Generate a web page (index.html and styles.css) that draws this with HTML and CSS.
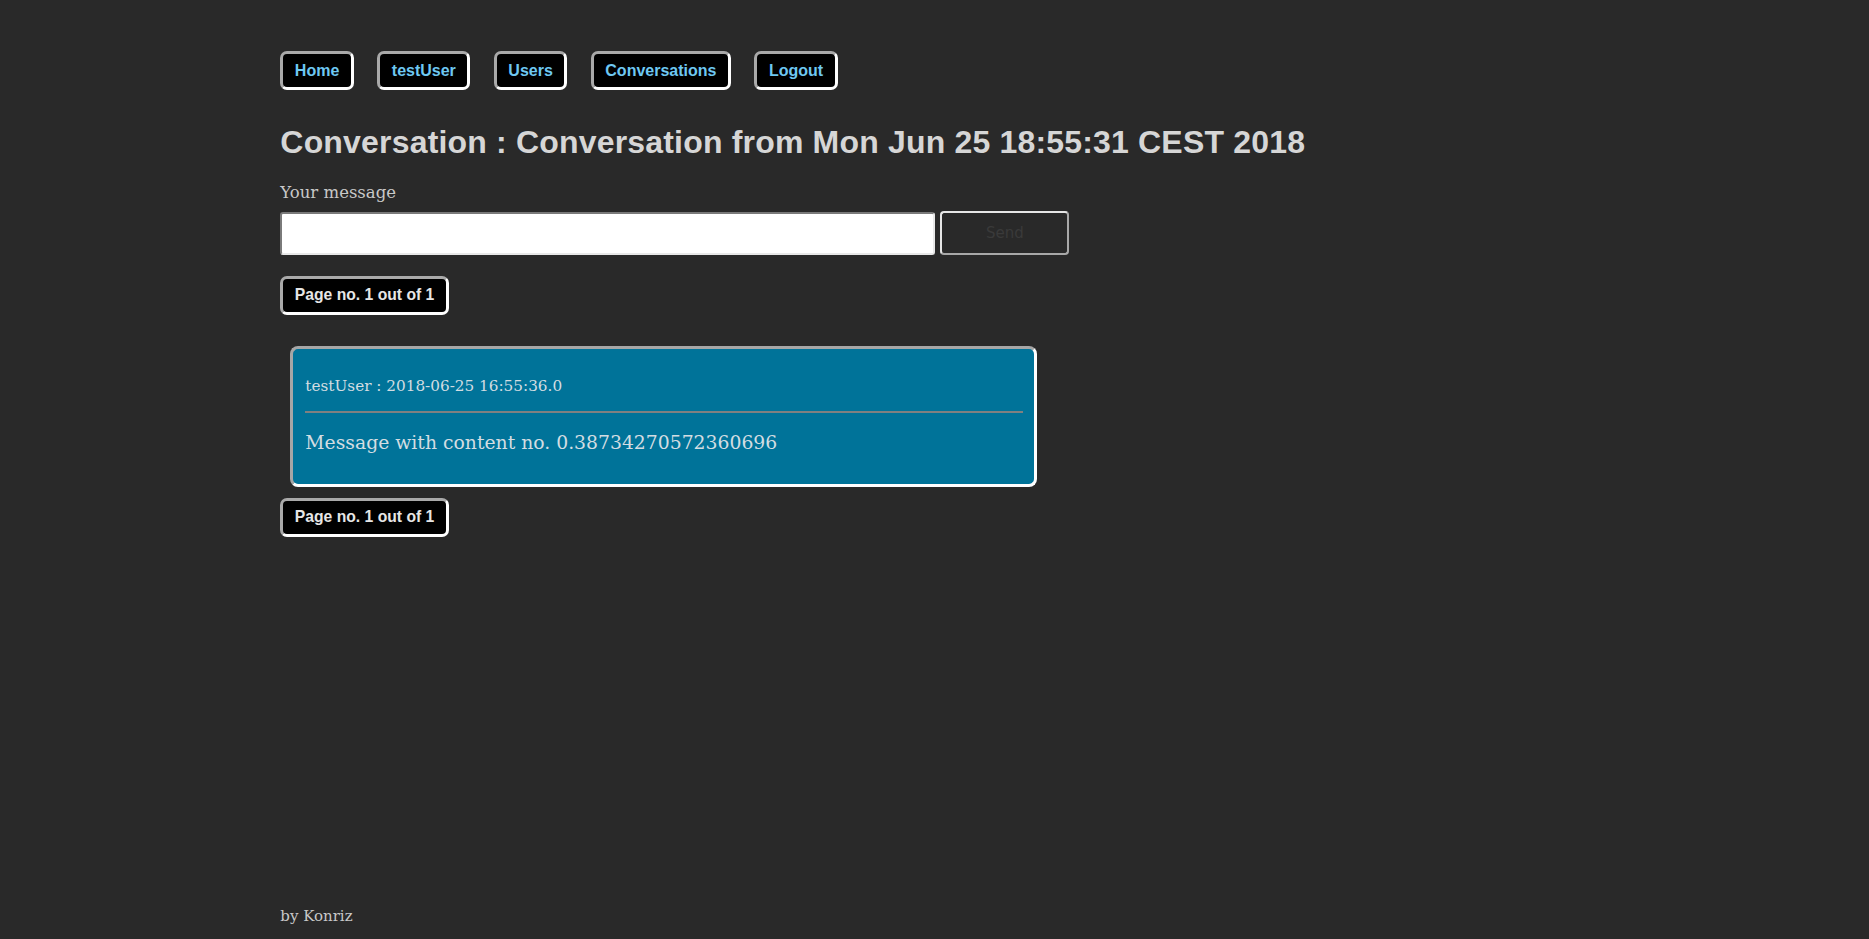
FILE: index.html
```html
<!DOCTYPE html>
<html lang="en">
<head>
<meta charset="utf-8">
<title>Conversation</title>
<link rel="stylesheet" href="styles.css">
</head>
<body>
<div class="page">
  <nav class="nav">
    <a class="btn nav-btn" href="#">Home</a>
    <a class="btn nav-btn" href="#">testUser</a>
    <a class="btn nav-btn" href="#">Users</a>
    <a class="btn nav-btn" href="#">Conversations</a>
    <a class="btn nav-btn" href="#">Logout</a>
  </nav>
  <h1 class="title">Conversation : Conversation from Mon Jun 25 18:55:31 CEST 2018</h1>
  <form class="msg-form">
    <label class="label" for="msg">Your message</label>
    <div class="form-row">
      <input class="msg-input" id="msg" type="text">
      <button class="send" type="button" disabled>Send</button>
    </div>
  </form>
  <div class="pager-row"><span class="btn pager">Page no. 1 out of 1</span></div>
  <div class="card">
    <p class="card-meta">testUser : 2018-06-25 16:55:36.0</p>
    <hr class="card-rule">
    <p class="card-text">Message with content no. 0.38734270572360696</p>
  </div>
  <div class="pager-row pager-row-2"><span class="btn pager">Page no. 1 out of 1</span></div>
  <footer class="footer">by Konriz</footer>
</div>
</body>
</html>
```
FILE: styles.css
```css
* { box-sizing: border-box; }
html, body { margin: 0; padding: 0; }
body {
  background: #292929;
  color: #cfcfcf;
  font-family: "DejaVu Serif", serif;
}
.page {
  margin: 0 15%;
  min-height: 100vh;
  padding-top: 51px;
  display: flex;
  flex-direction: column;
  align-items: flex-start;
}
.nav {
  display: flex;
  gap: 23.5px;
}
.btn {
  display: inline-block;
  background: #000;
  border: 3px solid;
  border-color: #a9a9a9 #ffffff #ffffff #a9a9a9;
  border-radius: 7px;
  padding: 7.5px 11.5px;
  font-family: "Liberation Sans", Arial, sans-serif;
  font-weight: bold;
  font-size: 16px;
  line-height: 18px;
  text-decoration: none;
}
.nav-btn { color: #6ec8f2; }
.title {
  margin: 34px 0 0;
  font-family: "Liberation Sans", Arial, sans-serif;
  font-weight: bold;
  font-size: 32px;
  letter-spacing: 0.18px;
  line-height: 37px;
  color: #d6d6d6;
}
.msg-form {
  margin-top: 21.5px;
  display: flex;
  flex-direction: column;
}
.label {
  font-size: 16.5px;
  line-height: 20px;
  color: #c8c8c8;
}
.form-row {
  margin-top: 9px;
  display: flex;
  gap: 5px;
  align-items: flex-start;
}
.msg-input {
  width: 655px;
  height: 43px;
  margin: 0;
  background: #fff;
  border: 2px solid;
  border-color: #7a7a7a #e8e8e8 #e8e8e8 #7a7a7a;
  border-radius: 3px;
  font-size: 16px;
}
.send {
  width: 129px;
  height: 44px;
  margin: -1px 0 0;
  background: #292929;
  border: 2px solid;
  border-color: #e6e6e6 #a8a8a8 #a8a8a8 #e6e6e6;
  border-radius: 4px;
  color: #3a3a3a;
  font-family: "DejaVu Sans", sans-serif;
  font-size: 15px;
}
.pager-row { margin-top: 21px; }
.pager { color: #e6e6e6; font-size: 15.7px; }
.card {
  margin: 31px 0 0 10px;
  width: 747px;
  background: #007399;
  border: 3px solid;
  border-color: #a6a6a6 #ffffff #ffffff #a6a6a6;
  border-radius: 8px;
  padding: 27px 11px 29px 12px;
  color: #d3dde2;
}
.card-meta {
  margin: 0;
  font-size: 15.25px;
  line-height: 20px;
}
.card-rule {
  margin: 15px 0 0;
  border: 0;
  height: 2px;
  background: #808080;
}
.card-text {
  margin: 18px 0 0;
  font-size: 18.8px;
  line-height: 24px;
}
.pager-row-2 { margin-top: 11px; }
.footer {
  margin-top: auto;
  padding-bottom: 13px;
  font-size: 15px;
  line-height: 20px;
  color: #c8c8c8;
}
```
